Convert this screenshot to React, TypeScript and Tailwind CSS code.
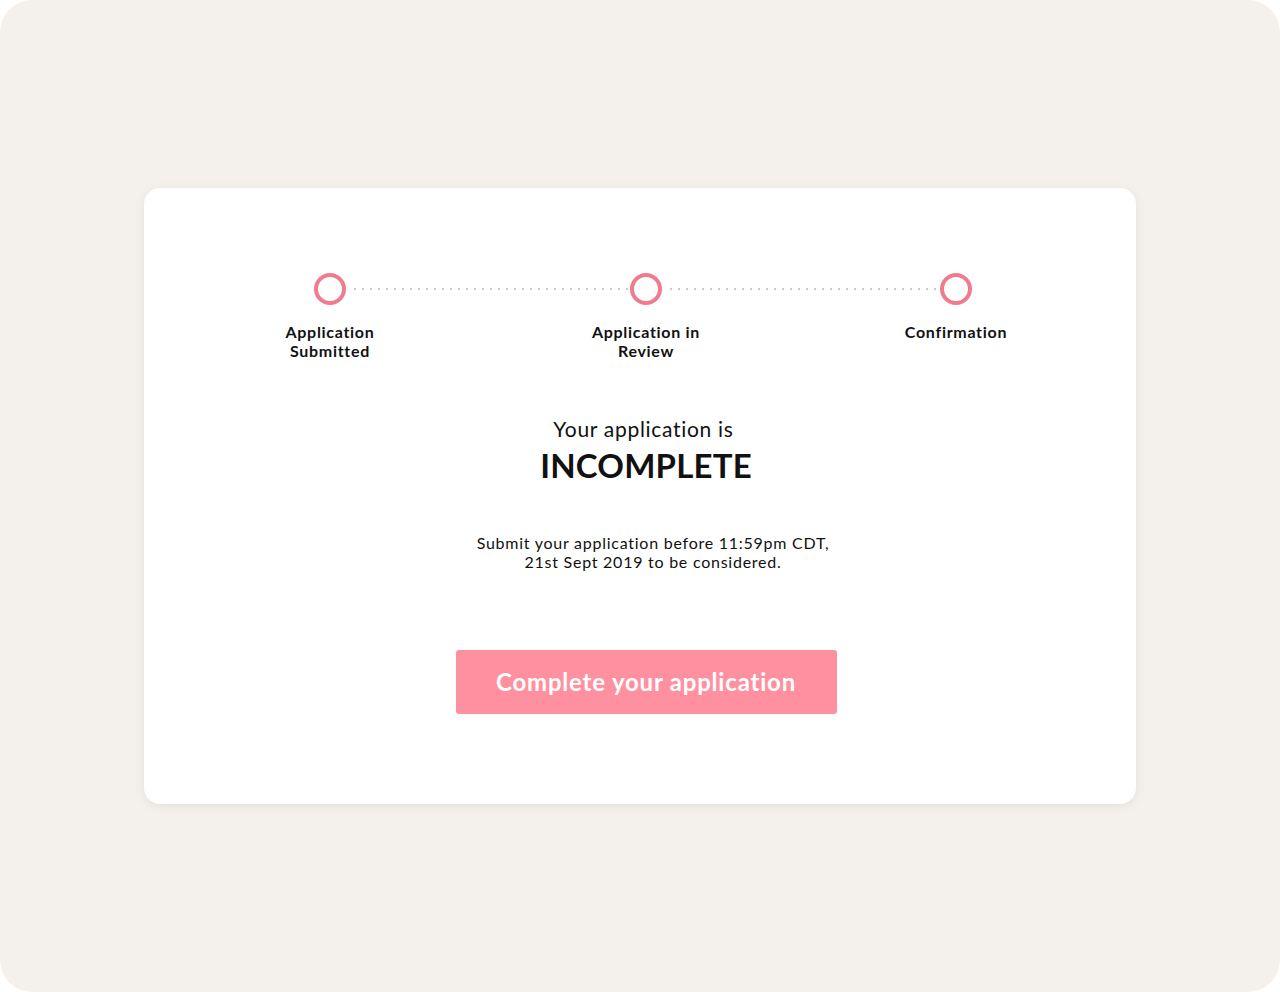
const steps = [
  { col: 'col-start-1', label: ['Application', 'Submitted'] },
  { col: 'col-start-3', label: ['Application in', 'Review'] },
  { col: 'col-start-5', label: ['Confirmation'] },
];

const Circle = () => (
  <div className="w-8 h-8 rounded-full border-4 border-[#f07b8d] bg-white" />
);

const Dots = ({ w }: { w: string }) => (
  <div className={`${w} h-8 flex items-center pl-[5px]`}>
    <div className="w-full h-[4px] bg-[radial-gradient(circle,#c9c9c9_0.9px,transparent_1.3px)] bg-[length:8px_4px]" />
  </div>
);

export default function App() {
  return (
    <div className="min-h-screen bg-white">
      <div
        className="h-[992px] w-[1280px] rounded-[32px] bg-[#f4f1ec] pt-[188px] pl-[144px]"
        style={{ fontFamily: 'Lato, "Open Sans", sans-serif' }}
      >
        <div className="w-[992px] h-[616px] rounded-2xl bg-white shadow-[0_2px_10px_rgba(120,100,80,0.12)] pt-[85px] pl-[170px] text-[#111]">
          {/* Progress steps */}
          <div className="grid grid-cols-[32px_284px_32px_278px_32px] items-center">
            <Circle />
            <Dots w="w-[284px]" />
            <Circle />
            <Dots w="w-[278px]" />
            <Circle />
            {steps.map((s) => (
              <div
                key={s.col}
                className={`${s.col} row-start-2 self-start justify-self-center whitespace-nowrap text-center text-[16px] leading-[19px] font-bold tracking-[0.7px] mt-[17px]`}
              >
                {s.label.map((l) => (
                  <div key={l}>{l}</div>
                ))}
              </div>
            ))}
          </div>

          {/* Status */}
          <div className="w-[652px] flex flex-col items-center ml-[6px] mt-[56px]">
            <p className="-ml-[5px] text-[21px] leading-[26px] font-normal tracking-[0.7px]">Your application is</p>
            <p className="mt-[3px] text-[33px] leading-[40px] font-bold tracking-[0.2px]">INCOMPLETE</p>
            <p className="ml-[14px] mt-[48px] text-[16px] leading-[19px] text-center tracking-[0.75px]">
              Submit your application before 11:59pm CDT,
              <br />
              21st Sept 2019 to be considered.
            </p>
            <button className="mt-[79px] w-[381px] h-16 rounded-[3px] bg-[#ff909f] text-white text-[24px] font-bold tracking-[0.8px]">
              Complete your application
            </button>
          </div>
        </div>
      </div>
    </div>
  );
}
